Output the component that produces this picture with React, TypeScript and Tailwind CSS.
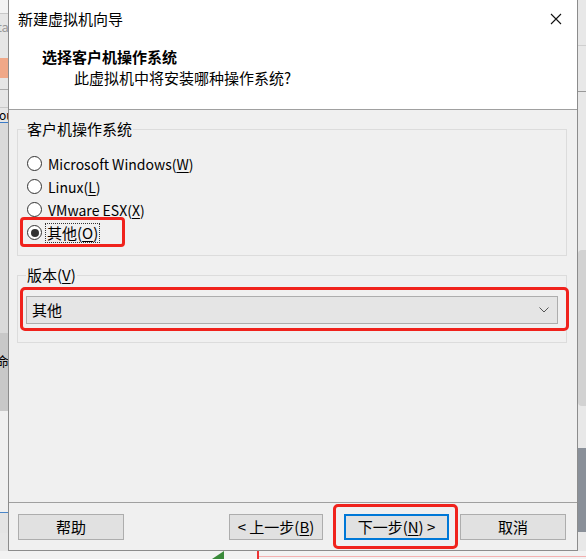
import React from 'react';

const FONT = '"Noto Sans CJK SC", "Noto Sans", sans-serif';

function Radio({ label, keyChar, checked = false, latin = false }: { label: string; keyChar: string; checked?: boolean; latin?: boolean }) {
  return (
    <div className="relative h-[23px] flex items-center">
      <span className="ml-[1px] w-[15px] h-[15px] rounded-full border border-[#333] bg-white flex items-center justify-center shrink-0">
        {checked && <span className="w-[8px] h-[8px] rounded-full bg-[#333]" />}
      </span>
      <span
        className={`leading-[18px] ${latin ? 'text-[14px]' : ''} ${
          checked ? 'ml-[4px] px-[1px] outline outline-1 outline-dotted outline-[#333]' : 'ml-[6px]'
        }`}
      >
        {label}(<span className="underline underline-offset-2">{keyChar}</span>)
      </span>
    </div>
  );
}

export default function App() {
  return (
    <div
      className="relative w-[586px] h-[559px] overflow-hidden bg-[#f0f0f0] text-[15px] text-black"
      style={{ fontFamily: FONT }}
    >
      {/* backdrop: left strip */}
      <div className="absolute left-0 top-0 w-[8px] h-[559px] bg-[#e6e6e6] overflow-hidden">
        <div className="h-[14px] bg-[#f3f3f3] border-b border-[#c8c8c8]" />
        <div className="text-[#999] text-[13px] leading-[26px] -ml-[3px]">ta</div>
        <div className="h-[20px] mt-[18px] bg-[#f0a888]" />
        <div className="h-[12px] border-b border-[#aaa]" />
        <div className="h-[18px] border-b border-[#c8c8c8]" />
        <div className="text-[12px] leading-[14px] -ml-[1px]">ou</div>
        <div className="h-[1px] bg-[#3a7bc8]" />
        <div className="h-[210px] bg-[#dadada]" />
        <div className="h-[78px] bg-[#c8c8c8] pt-[18px] text-[13px] leading-[20px] -ml-[4px]">命</div>
        <div className="h-[102px] bg-[#f0f0f0] border-b border-[#4a86c8]" />
        <div className="h-[20px] bg-[#e4e4e4]" />
      </div>
      {/* backdrop: right strip */}
      <div className="absolute left-[578px] top-0 w-[8px] h-[559px] bg-[#e8e8e8] flex flex-col">
        <div className="h-[46px] border-b border-[#cfcfcf]" />
        <div className="h-[46px] border-b border-[#999]" />
        <div className="h-[158px]" />
        <div className="h-[156px] bg-[#d2d2d2] rounded-l-[4px]" />
        <div className="h-[42px]" />
        <div className="h-[84px] bg-[#8a9099]" />
      </div>
      {/* backdrop: bottom strip */}
      <div className="absolute left-0 top-[551px] w-[586px] h-[8px] bg-[#f2f2f2]">
        <svg className="absolute left-[208px] top-0" width="16" height="8" viewBox="0 0 16 8">
          <polygon points="4,8 16,0 16,8" fill="#3a8a3a" />
        </svg>
        <div className="absolute left-[257px] top-0 w-[2px] h-[8px] bg-[#e33]" />
        <div className="absolute left-[259px] top-[5px] w-[327px] h-[1px] bg-[#f4b0b0]" />
      </div>

      {/* dialog */}
      <div className="absolute left-[8px] top-0 w-[570px] h-[551px] border border-t-0 border-[#8c8c8c] bg-[#f0f0f0] flex flex-col">
        <div className="bg-white h-[110px] border-b border-[#a0a0a0] flex flex-col">
          <div className="h-[38px] flex items-center justify-between pl-[9px] pr-[15px]">
            <span className="leading-[20px]">新建虚拟机向导</span>
            <svg width="12" height="12" viewBox="0 0 12 12" className="mt-[-1px]">
              <path d="M1 1 L11 11 M11 1 L1 11" stroke="#111" strokeWidth="1.1" />
            </svg>
          </div>
          <div className="pl-[33px] font-bold leading-[20px] mt-[9px]">选择客户机操作系统</div>
          <div className="pl-[65px] leading-[20px] mt-[1px]">此虚拟机中将安装哪种操作系统?</div>
        </div>

        <div className="flex-1 pl-[8px] pr-[10px] pt-[9px]">
          <fieldset className="border border-[#dcdcdc] px-[8px] pb-[11px]">
            <legend className="px-[1px] leading-[20px]">客户机操作系统</legend>
            <div className="pt-[13px] flex flex-col">
              <Radio label="Microsoft Windows" keyChar="W" latin />
              <Radio label="Linux" keyChar="L" latin />
              <Radio label="VMware ESX" keyChar="X" latin />
              <div className="relative">
                <Radio label="其他" keyChar="O" checked />
                <div className="absolute left-[-6px] top-[-4px] w-[105px] h-[30px] border-[3px] border-[#f0221c] rounded-[4px]" />
              </div>
            </div>
          </fieldset>

          <fieldset className="border border-[#dcdcdc] px-[8px] pb-[18px] mt-[9px]">
            <legend className="px-[1px] leading-[20px]">
              版本(<span className="underline underline-offset-2">V</span>)
            </legend>
            <div className="relative mt-[11px]">
              <div className="h-[28px] bg-[#e5e5e5] border border-[#adadad] flex items-center justify-between pl-[5px] pr-[8px]">
                <span className="leading-[20px]">其他</span>
                <svg width="10" height="6" viewBox="0 0 10 6">
                  <path d="M0.5 0.5 L5 5 L9.5 0.5" fill="none" stroke="#555" strokeWidth="1" />
                </svg>
              </div>
              <div className="absolute left-[-6px] right-[-11px] top-[-9px] bottom-[-7px] border-[3px] border-[#f0221c] rounded-[5px]" />
            </div>
          </fieldset>
        </div>

        <div className="border-t border-[#a0a0a0] h-[48px] flex items-start pt-[11px] pl-[9px] pr-[11px]">
          <button className="w-[106px] h-[26px] bg-[#e1e1e1] border border-[#adadad] leading-[20px]">帮助</button>
          <div className="ml-auto flex items-start">
            <button className="w-[94px] h-[26px] bg-[#e1e1e1] border border-[#adadad] leading-[20px]">
              &lt; 上一步(<span className="underline underline-offset-2">B</span>)
            </button>
            <div className="relative ml-[21px]">
              <button className="w-[105px] h-[26px] bg-[#e1e1e1] border-2 border-[#0078d7] leading-[20px]">
                下一步(<span className="underline underline-offset-2">N</span>) &gt;
              </button>
              <div className="absolute left-[-11px] right-[-9px] top-[-10px] bottom-[-9px] border-[3px] border-[#f0221c] rounded-[5px]" />
            </div>
            <button className="ml-[11px] w-[106px] h-[26px] bg-[#e1e1e1] border border-[#adadad] leading-[20px]">取消</button>
          </div>
        </div>
      </div>
    </div>
  );
}
